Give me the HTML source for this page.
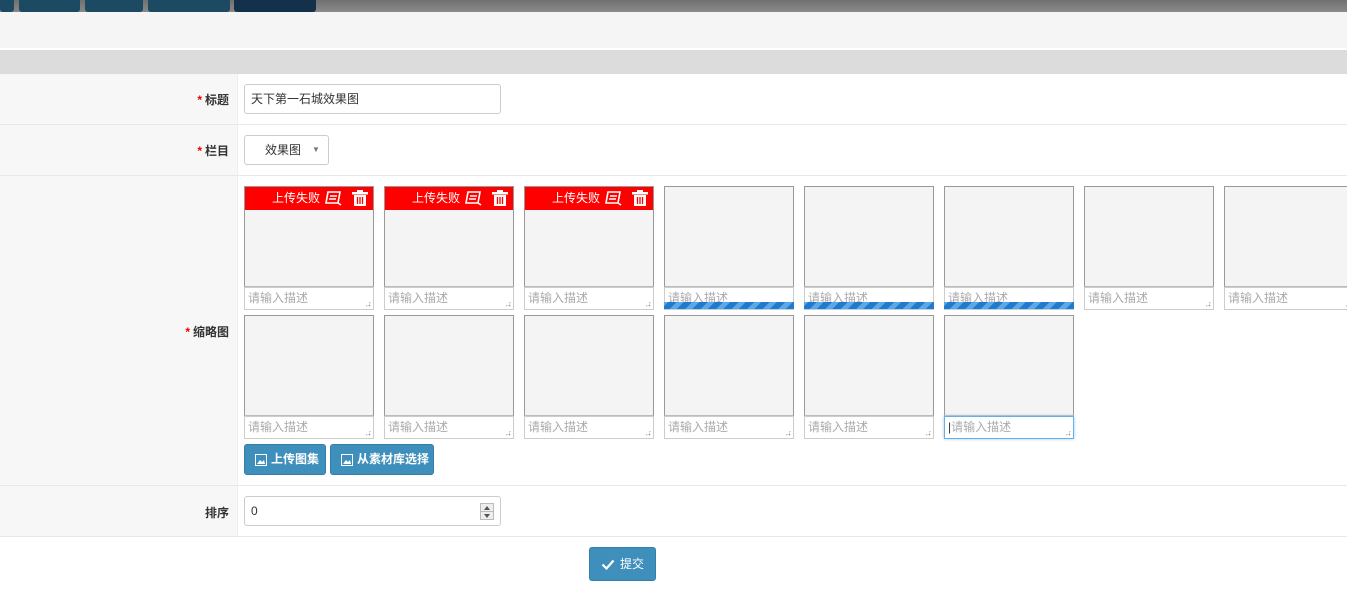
<!DOCTYPE html>
<html><head><meta charset="utf-8"><style>
*{box-sizing:border-box;margin:0;padding:0}
body{width:1347px;height:611px;overflow:hidden;background:#fff;font-family:"Liberation Sans","Noto Sans CJK SC",sans-serif;font-size:12px;color:#333;position:relative}
.a{position:absolute}
.tab{position:absolute;top:0;height:12px;background:#1d4a63;border-radius:0 0 3px 3px}
.lbl{position:absolute;left:0;width:238px;background:#f7f7f7;border-right:1px solid #eee}
.line{position:absolute;left:0;width:1347px;height:1px;background:#e8e8e8}
.lt{position:absolute;right:1118px;font-size:12px;font-weight:bold;color:#333}
.lt b{color:#e00;margin-right:3px}
.img{position:absolute;width:130px;height:101px;background:#f4f4f4;border:1px solid #999;border-bottom:1px solid #bbb}
.desc{position:absolute;width:130px;height:23px;border:1px solid #ccc;background:#fff;color:#aaa;font-size:12px;padding:2px 3px;line-height:17px}
.desc:after{content:"";position:absolute;right:2px;bottom:2px;width:6px;height:6px;background:radial-gradient(circle,#999 0.7px,transparent 1px) 0 0/3px 3px;clip-path:polygon(100% 0,100% 100%,0 100%)}
.err{position:absolute;left:0;top:0;width:128px;height:23px;background:#f00;color:#fff;font-size:12px;line-height:23px}
.bar{position:absolute;width:130px;height:7px;background:repeating-linear-gradient(-45deg,#1f7bd0 0 6px,#5ba7e8 6px 11px)}
.btn{position:absolute;background:#3f8fbd;color:#fff;border-radius:3px;border:1px solid #357ea8;font-size:12px;font-weight:bold;line-height:29px}
</style></head><body>
<div class="a" style="left:0;top:0;width:1347px;height:12px;background:linear-gradient(#707070,#8a8a8a)"></div>
<div class="tab" style="left:0;width:14px"></div>
<div class="tab" style="left:19px;width:61px"></div>
<div class="tab" style="left:85px;width:58px"></div>
<div class="tab" style="left:148px;width:82px"></div>
<div class="tab" style="left:234px;width:82px;background:#13314a"></div>
<div class="a" style="left:0;top:12px;width:1347px;height:36px;background:#f5f5f5"></div>
<div class="a" style="left:0;top:50px;width:1347px;height:24px;background:#dcdcdc"></div>

<div class="lbl" style="top:74px;height:462px"></div>
<div class="line" style="top:124px"></div>
<div class="line" style="top:175px"></div>
<div class="line" style="top:485px"></div>
<div class="line" style="top:536px"></div>

<div class="lt" style="top:91px"><b>*</b>标题</div>
<div class="a" style="left:244px;top:84px;width:257px;height:30px;border:1px solid #ccc;border-radius:3px;padding:0 6px;line-height:28px;font-size:12px">天下第一石城效果图</div>
<div class="lt" style="top:142px"><b>*</b>栏目</div>
<div class="a" style="left:244px;top:135px;width:85px;height:30px;border:1px solid #ccc;border-radius:3px;line-height:28px;padding-left:20px">效果图<span style="position:absolute;left:67px;top:0;font-size:8px;color:#777">▼</span></div>
<div class="lt" style="top:323px"><b>*</b>缩略图</div>
<div class="lt" style="top:504px">排序</div>

<div id="tiles"></div>
<script>
var h='';
function tile(x,y,err,bar,focus){
h+='<div class="img" style="left:'+x+'px;top:'+y+'px">'+(err?'<div class="err"><span style="position:absolute;left:27px">上传失败</span><svg style="position:absolute;left:80px;top:3px" width="18" height="17" viewBox="0 0 18 17"><path d="M3 2h12l-2 11H1z" fill="none" stroke="#fff" stroke-width="1.6"/><path d="M5 6h7M4 9h7" stroke="#fff" stroke-width="1.5"/><path d="M13 13l3 2" stroke="#fff" stroke-width="1.5"/></svg><svg style="position:absolute;left:106px;top:3px" width="18" height="17" viewBox="0 0 18 17"><rect x="1" y="2" width="16" height="2.5" fill="#fff"/><rect x="6" y="0" width="6" height="2" fill="#fff"/><path d="M3 5h12v11H3z" fill="#fff"/><path d="M6.5 7v7M9 7v7M11.5 7v7" stroke="#f00" stroke-width="1.3"/></svg></div>':'')+'</div>';
h+='<div class="desc" style="left:'+x+'px;top:'+(y+101)+'px'+(focus?';border-color:#66afe9;box-shadow:0 0 3px #9cc9ee':'')+'">'+(focus?'<span style="color:#333">|</span>':'')+'请输入描述</div>';
if(bar)h+='<div class="bar" style="left:'+x+'px;top:'+(y+116)+'px"></div>';
}
for(var i=0;i<8;i++)tile(244+140*i,186,i<3,i>=3&&i<6,false);
for(var i=0;i<6;i++)tile(244+140*i,315,false,false,i==5);
document.getElementById('tiles').innerHTML=h;
</script>

<div class="btn" style="left:244px;top:444px;width:82px;height:31px;padding-left:26px">上传图集<svg style="position:absolute;left:10px;top:9px" width="12" height="12" viewBox="0 0 12 12"><rect x="0.5" y="0.5" width="11" height="11" fill="none" stroke="#fff"/><path d="M2 10l3-4 2 2 2-2 1 4z" fill="#fff"/></svg></div>
<div class="btn" style="left:330px;top:444px;width:104px;height:31px;padding-left:26px">从素材库选择<svg style="position:absolute;left:10px;top:9px" width="12" height="12" viewBox="0 0 12 12"><rect x="0.5" y="0.5" width="11" height="11" fill="none" stroke="#fff"/><path d="M2 10l3-4 2 2 2-2 1 4z" fill="#fff"/></svg></div>

<div class="a" style="left:244px;top:496px;width:257px;height:30px;border:1px solid #ccc;border-radius:3px;padding:0 6px;line-height:28px;font-size:12px">0
<div style="position:absolute;right:6px;top:6px;width:14px;height:17px;border:1px solid #bbb;background:#eee"><div style="position:absolute;left:3px;top:2px;border:3.5px solid transparent;border-bottom:4px solid #555;border-top:0"></div><div style="position:absolute;left:0;top:7px;width:12px;height:1px;background:#bbb"></div><div style="position:absolute;left:3px;top:10px;border:3.5px solid transparent;border-top:4px solid #555;border-bottom:0"></div></div></div>

<div class="btn" style="left:589px;top:547px;width:67px;height:34px;line-height:32px;padding-left:30px;font-weight:normal">提交<svg style="position:absolute;left:11px;top:11px" width="14" height="11" viewBox="0 0 14 11"><path d="M1.5 5.5l4 4 7-8" fill="none" stroke="#fff" stroke-width="2.2"/></svg></div>
</body></html>
